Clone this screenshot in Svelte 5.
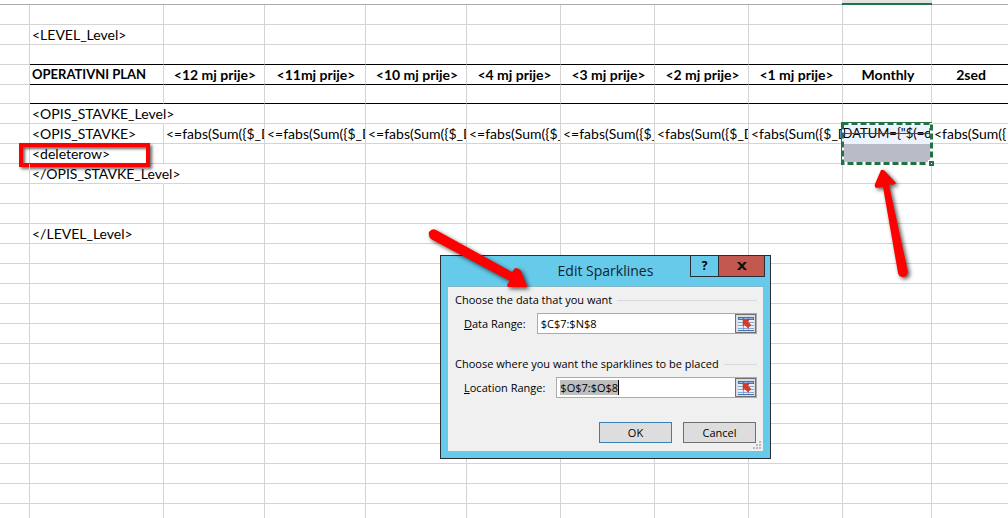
<script>
  const columns = [30, 134, 101, 101, 101, 94, 94, 94, 94, 89];
  const empty = () => Array(11).fill('');
  const line = (text) => ['', text, ...Array(9).fill('')];
  const f = '<=fabs(Sum({$_D';
  const g = '<fabs(Sum({$_D';
  const rows = [
    { cells: empty() },
    { cells: line('<LEVEL_Level>') },
    { cells: empty(), rule: true },
    {
      cells: ['', 'OPERATIVNI PLAN', '<12 mj prije>', '<11mj prije>', '<10 mj prije>', '<4 mj prije>', '<3 mj prije>', '<2 mj prije>', '<1 mj prije>', 'Monthly', '2sed'],
      rule: true,
      head: true
    },
    { cells: empty(), rule: true, short: true },
    { cells: line('<OPIS_STAVKE_Level>'), spill: true },
    { cells: ['', '<OPIS_STAVKE>', f, f, f, '<=fabs(Sum({$_', '<=fabs(Sum({$_', g, g, 'DATUM={"$(=d', '<fabs(Sum({'], pick: 'first' },
    { cells: line('<deleterow>'), pick: 'second', mark: true },
    { cells: line('</OPIS_STAVKE_Level>'), spill: true },
    { cells: empty() },
    { cells: empty() },
    { cells: line('</LEVEL_Level>') },
    ...Array.from({ length: 14 }, () => ({ cells: empty() }))
  ];
  let dataRange = $state('$C$7:$N$8');
</script>

{#snippet picker()}
  <svg width="16" height="14" viewBox="0 0 16 14" aria-hidden="true">
    <rect width="16" height="14" fill="#e6effa" />
    <path d="M0 0h16v3H0z" fill="#4470c0" />
    <path d="M1 1h4v1H1zM6 1h4v1H6zM11 1h4v1h-4z" fill="#8fb0e4" />
    <path d="M0 5.5h16M0 8.5h16M0 11.5h16M5.5 3v10M10.5 3v10" stroke="#86a5d6" />
    <path d="M0 13.5h16" stroke="#4b70b4" />
    <path d="M5 3h6L9.500 4.500 13 8 10 11 6.500 7.500 5 9z" fill="#e0391f" stroke="#b03a28" stroke-width=".5" />
  </svg>
{/snippet}

<main>
  <div class="strip" aria-hidden="true"><span></span></div>
  <table>
    <colgroup>
      {#each columns as w}<col style="width: {w}px" />{/each}
      <col />
    </colgroup>
    <tbody>
      {#each rows as row}
        <tr class:rule={row.rule} class:short={row.short} class:head={row.head} class:spill={row.spill}>
          {#each row.cells as text, i}
            <td class:picked={i === 9 && row.pick === 'first'} class:shaded={i === 9 && row.pick === 'second'} class:marked={i === 1 && row.mark}>
              <div class="cell">{text}</div>
              {#if i === 9 && row.pick === 'first'}
                <svg class="ants" width="93" height="44" viewBox="0 0 93 44" aria-hidden="true">
                  <rect x="1.500" y="1.500" width="89" height="40" fill="none" stroke="#fff" stroke-width="3" />
                  <rect x="1.500" y="1.500" width="89" height="40" fill="none" stroke="#217346" stroke-width="3" stroke-dasharray="6 3" />
                  <path d="M0 0h1v43H0zM0 0h91v1H0z" fill="#217346" />
                  <rect x="87" y="38" width="6" height="6" fill="#fff" />
                  <rect x="88" y="39" width="5" height="5" fill="#217346" />
                  <rect x="90" y="41" width="1" height="1" fill="#fff" />
                </svg>
              {/if}
            </td>
          {/each}
        </tr>
      {/each}
    </tbody>
  </table>

  <form class="dialog" aria-label="Edit Sparklines" onsubmit={(e) => e.preventDefault()}>
    <header>
      <h1>Edit Sparklines</h1>
      <div class="caption">
        <button type="button" class="help">?</button>
        <button type="button" class="close" aria-label="Close">
          <svg width="10" height="8" viewBox="0 0 10 8" aria-hidden="true"><path d="M0 0h3l2 2.500L7 0h3L6.500 4 10 8H7L5 5.500 3 8H0l3.500-4z" fill="#111" /></svg>
        </button>
      </div>
    </header>
    <div class="body">
      <h2>Choose the data that you want</h2>
      <div class="field">
        <label for="data"><u>D</u>ata Range:</label>
        <div class="box">
          <input id="data" bind:value={dataRange} />
          <button type="button" aria-label="Select data range">{@render picker()}</button>
        </div>
      </div>
      <h2 class="second">Choose where you want the sparklines to be placed</h2>
      <div class="field">
        <label for="location"><u>L</u>ocation Range:</label>
        <div class="box">
          <div id="location" class="entry" role="textbox" tabindex="0" contenteditable="true" aria-label="Location Range"><mark>$O$7:$O$8</mark></div>
          <button type="button" aria-label="Select location range">{@render picker()}</button>
        </div>
      </div>
      <div class="actions">
        <button type="submit" class="ok">OK</button>
        <button type="button">Cancel</button>
      </div>
      <svg class="grip" width="8" height="8" viewBox="0 0 8 8" aria-hidden="true">
        <path d="M6 0h2v2H6zM3 3h2v2H3zM6 3h2v2H6zM0 6h2v2H0zM3 6h2v2H3zM6 6h2v2H6z" fill="#bcbcbc" />
      </svg>
    </div>
  </form>

  <svg class="arrow up" width="60" height="120" viewBox="0 0 60 120" aria-hidden="true">
    <path d="M21 10Q23 9 25 11L36 23Q34 26 30 24L29 25 48 112Q47 117 43 117 39 117 38 113L23 27 16 28Q14 26 15 24z" fill="#f00" />
  </svg>
  <svg class="arrow down" width="120" height="80" viewBox="0 0 120 80" aria-hidden="true">
    <path d="M16 9L92 51 95 47Q99 47 101 50L107 65Q107 67 104 66L88 66Q86 64 89 61L90 60 11 18Q8 15 9 11 12 7 16 9z" fill="#f00" />
  </svg>
</main>

<style>
  :global(body) { margin: 0; background: #fff; }
  :global(html) { overflow: hidden; }
  main { position: relative; overflow: hidden; min-height: 100vh; max-height: 100vh; color: #000; font: 14px/19px Lato, sans-serif; }
  .strip { display: flex; height: 4px; border-bottom: 1px solid #ababab; padding-left: 842px; }
  .strip span { width: 90px; height: 3px; background: #e1e1e1; border-bottom: 2px solid #217346; }
  table { width: 100%; table-layout: fixed; border-collapse: separate; border-spacing: 0; }
  td { position: relative; height: 19px; padding: 0; border: solid #d4d4d4; border-width: 0 1px 1px 0; }
  td:last-child { border-right: 0; }
  .cell { height: 19px; padding-left: 2px; box-sizing: border-box; overflow: hidden; white-space: nowrap; }
  td:nth-child(2) .cell { overflow: visible; position: relative; }
  .short td, .short .cell { height: 18px; }
  .rule td:not(:first-child) { border-bottom-color: #000; }
  .spill td:nth-child(2) { border-right-color: transparent; }
  .head .cell { font-weight: 700; text-align: center; }
  .head td:nth-child(2) .cell { text-align: left; font-size: 13px; }
  .picked { background: #edf3fe; border-color: #edf3fe; }
  .picked .cell { display: flex; justify-content: center; padding-left: 0; font-size: 13px; text-decoration: line-through #1f4e8c; }
  .shaded { background: #b9bcc6; }
  .ants { position: absolute; left: -2px; top: -2px; z-index: 1; }
  .marked::after { content: ''; position: absolute; left: -11px; right: 13px; top: -1px; bottom: -4px; border: 4px solid #f00; box-shadow: 2px 2px 3px #0009, inset 2px 2px 3px #0009; }
  .dialog { position: absolute; left: 440px; top: 255px; width: 331px; box-sizing: border-box; border: 1px solid #2b2b33; background: #66caea; padding: 0 7px 7px; font: 12px/16px "Open Sans", sans-serif; }
  header { position: relative; height: 30px; }
  h1 { margin: 0; font-size: 14px; line-height: 29px; font-weight: 400; text-align: center; color: #12242c; }
  .caption { position: absolute; right: -2px; top: -1px; display: flex; }
  button { font: inherit; color: #000; padding: 0; box-sizing: border-box; display: flex; align-items: center; justify-content: center; }
  .caption button { height: 22px; border: 1px solid #2b2b33; }
  .help { width: 29px; background: #66caea; font-weight: 700; }
  .close { width: 47px; background: #c2584f; margin-left: -1px; }
  .body { position: relative; background: #f0f0f0; border: 1px solid #86b6c8; border-width: 1px 0 0; padding: 5px 6px 8px 7px; }
  h2 { display: flex; align-items: center; gap: 5px; margin: 0; font-size: 11px; line-height: 16px; font-weight: 400; white-space: nowrap; }
  h2::after { content: ''; flex: 1; height: 1px; background: #d5dce0; }
  .second { margin-top: 22px; }
  .field { display: flex; align-items: center; gap: 11px; margin-top: 5px; padding-left: 9px; font-size: 11px; }
  .box { display: flex; flex: 1; height: 21px; box-sizing: border-box; border: 1px solid #ababab; background: #fff; }
  input, .entry { flex: 1; min-width: 0; border: 0; padding: 0 3px; font: 11px/19px "Open Sans", sans-serif; outline: 0; background: none; color: #000; }
  mark { background: #bfbfbf; color: #000; border-right: 1px solid #000; }
  .box button { width: 21px; height: 19px; border: 1px solid #707070; background: #dcdcdc; }
  .actions { display: flex; justify-content: flex-end; gap: 11px; margin-top: 24px; padding-right: 1px; }
  .actions button { width: 73px; height: 21px; border: 1px solid #707070; background: #ddd; font-size: 11px; }
  .actions .ok { border-color: #3c7fb1; }
  .grip { position: absolute; right: 2px; bottom: 2px; }
  .arrow { position: absolute; filter: drop-shadow(2px 2px 2px #000a); }
  .up { left: 860px; top: 160px; }
  .down { left: 420px; top: 221px; }
</style>
